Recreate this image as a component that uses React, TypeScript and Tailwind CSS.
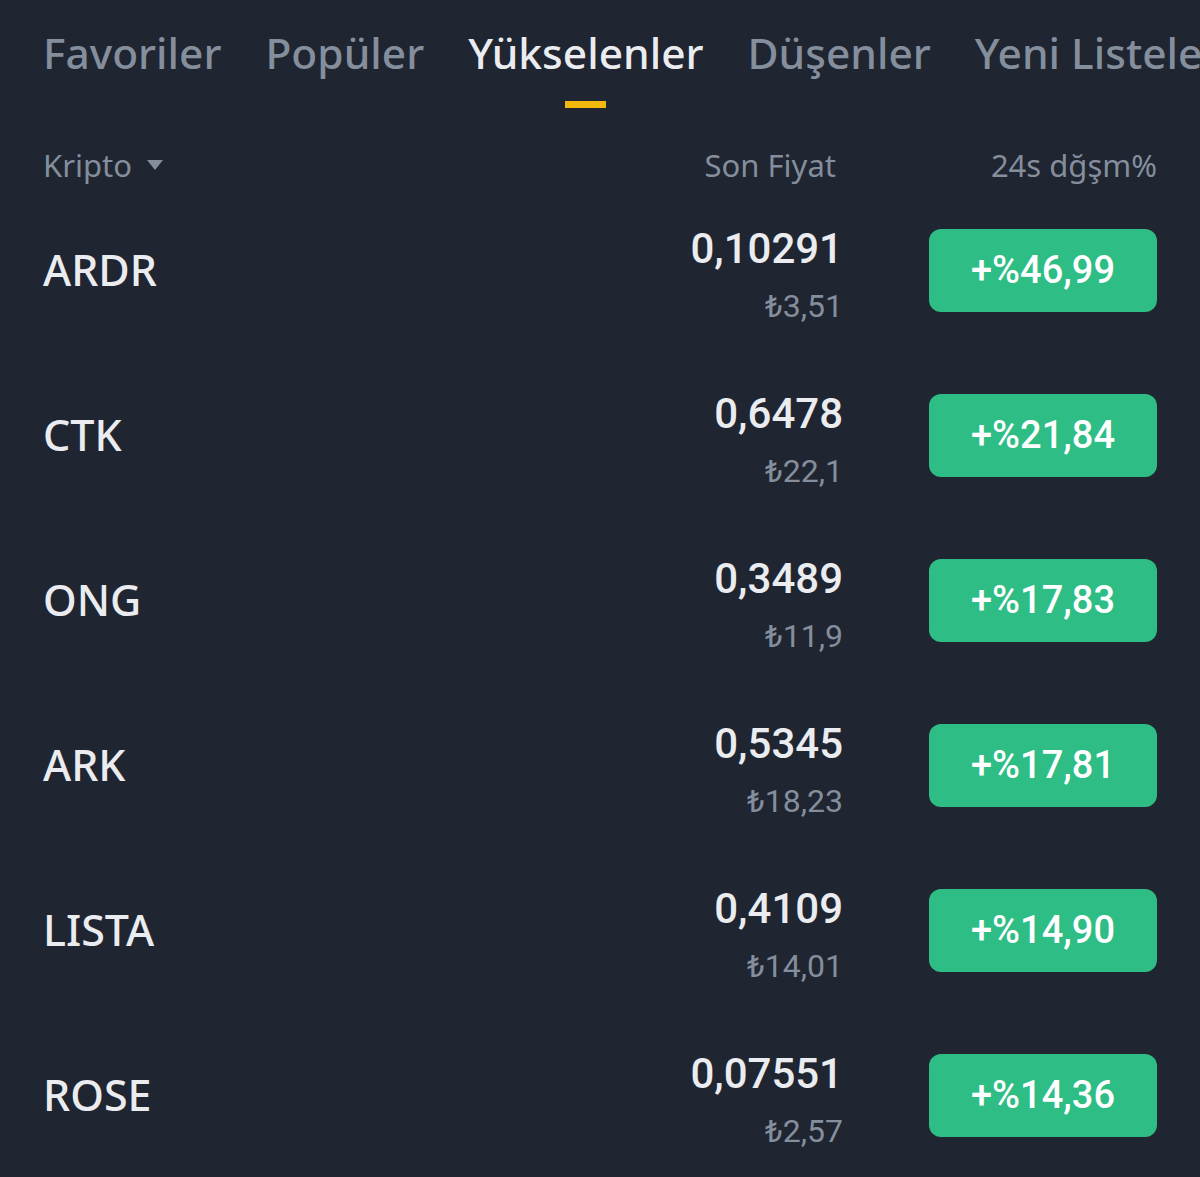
const tabs = ["Favoriler", "Popüler", "Yükselenler", "Düşenler", "Yeni Listelenenler"];

const rows = [
  { sym: "ARDR", price: "0,10291", fiat: "₺3,51", chg: "+%46,99" },
  { sym: "CTK", price: "0,6478", fiat: "₺22,1", chg: "+%21,84" },
  { sym: "ONG", price: "0,3489", fiat: "₺11,9", chg: "+%17,83" },
  { sym: "ARK", price: "0,5345", fiat: "₺18,23", chg: "+%17,81" },
  { sym: "LISTA", price: "0,4109", fiat: "₺14,01", chg: "+%14,90" },
  { sym: "ROSE", price: "0,07551", fiat: "₺2,57", chg: "+%14,36" },
];

const App = () => {
  return (
    <div className="w-[1200px] h-[1177px] overflow-hidden bg-[#1f2531] font-['Noto_Sans',sans-serif]">
      <div className="flex gap-[44px] pl-[43px] pt-[22px] h-[120px] whitespace-nowrap overflow-hidden">
        {tabs.map((t, idx) => (
          <div key={t} className="flex flex-col items-center shrink-0">
            <p
              className={`text-[42.5px] leading-[62px] font-medium ${
                idx === 2 ? "text-[#eaecef]" : "text-[#848e9c]"
              }`}
            >
              {t}
            </p>
            {idx === 2 && <div className="mt-[17px] w-[41px] h-[7px] bg-[#f0b90b]" />}
          </div>
        ))}
      </div>

      <div className="flex items-start h-[68px] pt-[24px] pl-[43px] pr-[43px] text-[31px] leading-[42px] text-[#848e9c]">
        <div className="flex flex-1 items-center gap-[14px]">
          <span>Kripto</span>
          <svg width="18" height="12" viewBox="0 0 18 12">
            <path d="M1 1 L17 1 L9 11 Z" fill="#848e9c" />
          </svg>
        </div>
        <span className="w-[300px] text-right">Son Fiyat</span>
        <span className="w-[321px] text-right">24s dğşm%</span>
      </div>

      <div className="flex flex-col pl-[43px] pr-[43px]">
        {rows.map((r) => (
          <div key={r.sym} className="flex items-center h-[165px]">
            <p className="flex-1 text-[43px] font-medium text-[#eaecef]">{r.sym}</p>
            <div className="flex flex-col items-end w-[300px] mr-[-3px] font-['Roboto',sans-serif] mt-[16px]">
              <p className="text-[42px] leading-[50px] font-medium text-[#eaecef]">{r.price}</p>
              <p className="mt-[4px] text-[32px] leading-[56px] text-[#848e9c]">{r.fiat}</p>
            </div>
            <div className="ml-[89px] w-[228px] h-[83px] rounded-[12px] bg-[#2ebd85] flex items-center justify-center font-['Roboto',sans-serif] text-[38px] font-medium text-white">
              {r.chg}
            </div>
          </div>
        ))}
      </div>
    </div>
  );
};

export default App;
